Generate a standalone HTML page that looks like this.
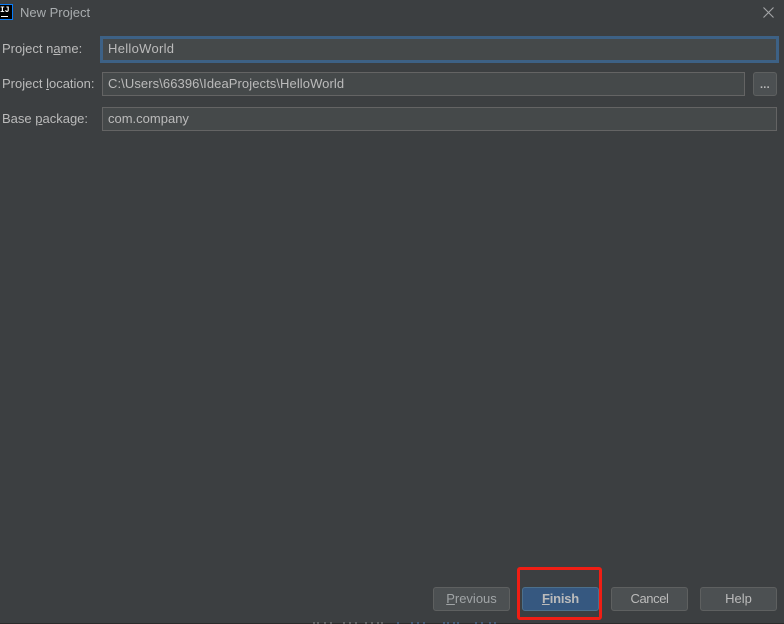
<!DOCTYPE html>
<html><head><meta charset="utf-8"><style>
html,body{margin:0;padding:0;background:#3c3f41}
#r{position:relative;width:784px;height:624px;overflow:hidden;background:#3c3f41;font-family:"Liberation Sans",sans-serif;font-size:13px;color:#bbbbbb}
#r div{position:absolute;box-sizing:border-box;white-space:nowrap}
.l{left:2px;height:16px;line-height:16px}
.f{left:102px;background:#45494a;border:1px solid #646464;height:24px;line-height:22px;padding-left:5px}
.b{top:587px;height:24px;border:1px solid #5e6060;border-radius:3px;background:#4c5052;text-align:center;line-height:22px}
u{text-underline-offset:1px}
</style></head><body><div id="r">
<div style="left:-6px;top:4px;width:19px;height:16px;background:#000;border:1px solid #087cfa"></div>
<div style="left:0;top:4px;font:bold 8px/13px 'Liberation Mono',monospace;color:#fff;width:12px;height:11px;">IJ</div>
<div style="left:1px;top:16px;width:7px;height:1px;background:#fff"></div>
<div style="left:20px;top:5px;height:16px;line-height:16px;color:#a9adaf">New Project</div>
<svg style="position:absolute;left:763px;top:7px" width="11" height="11" viewBox="0 0 11 11"><path d="M.5.5l10 10M10.5.5l-10 10" stroke="#a4a6a8" stroke-width="1.1" fill="none"/></svg>
<div class="l" style="top:41px">Project n<u>a</u>me:</div>
<div class="l" style="top:76px">Project <u>l</u>ocation:</div>
<div class="l" style="top:111px">Base <u>p</u>ackage:</div>
<div class="f" style="left:100px;top:36px;width:679px;height:27px;border:3px solid #3d6185;line-height:20px;padding-left:5px;letter-spacing:.3px">HelloWorld</div>
<div class="f" style="top:72px;width:643px;letter-spacing:.08px">C:\Users\66396\IdeaProjects\HelloWorld</div>
<div class="f" style="top:107px;width:675px">com.company</div>
<div style="left:753px;top:72px;width:24px;height:24px;background:#4c5052;border:1px solid #5e6060;border-radius:3px;text-align:center;font-weight:bold;font-size:11px;line-height:24px;color:#bbb;letter-spacing:.3px">...</div>
<div class="b" style="left:433px;width:77px;color:#a0a4a6"><u>P</u>revious</div>
<div class="b" style="left:522px;width:77px;background:#365880;border-color:#4c708c;font-weight:bold;color:#bbbbbb;letter-spacing:-.2px"><u>F</u>inish</div>
<div class="b" style="left:611px;width:77px;letter-spacing:-.4px">Cancel</div>
<div class="b" style="left:700px;width:77px">Help</div>
<div style="left:517px;top:567px;width:85px;height:53px;border:3px solid #f01e14;border-radius:3px"></div>
<div style="left:0;top:623px;width:784px;height:1px;background:#2b2b2b"></div>
<svg style="position:absolute;left:0;top:622px" width="784" height="2"><path d="M314 0v2M318 0v2M325 0v2M331 0v2M344 0v2M350 0v2M356 0v2M366 0v2M372 0v2M378 0v2M382 0v2" stroke="#8a8d8f"/><path d="M398 0v2M412 0v2M418 0v2M424 0v2M444 0v2M448 0v2M454 0v2M458 0v2M476 0v2M482 0v2M490 0v2M495 0v2" stroke="#4f7db5"/></svg>
</div></body></html>
